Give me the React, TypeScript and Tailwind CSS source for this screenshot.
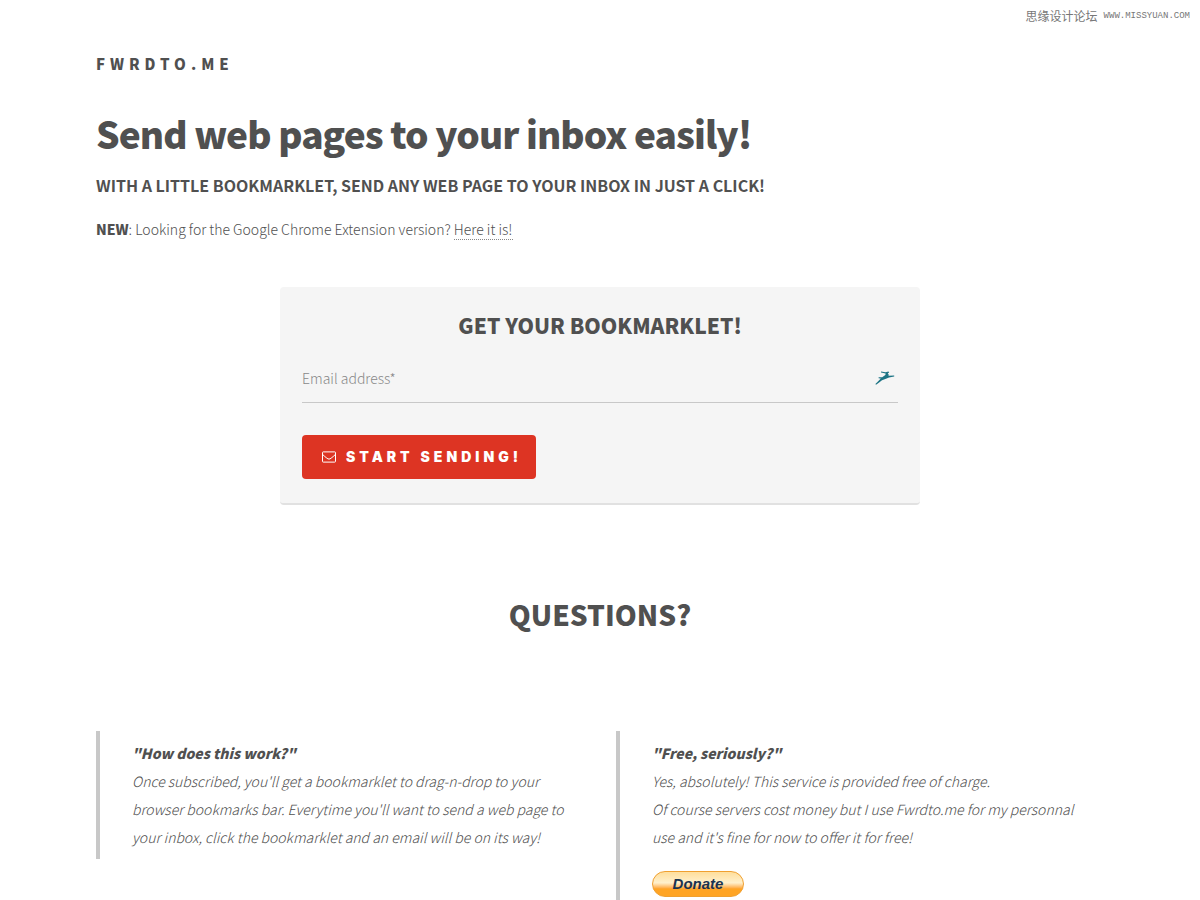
import type { ReactNode } from "react";

type QuestionProps = {
  title: string;
  children: ReactNode;
};

function Question({ title, children }: QuestionProps) {
  return (
    <blockquote className="border-l-4 border-[#c8c8c8] py-2 pl-8 pr-3 italic leading-7">
      <h3 className="font-black">"{title}"</h3>
      {children}
    </blockquote>
  );
}

function EnvelopeIcon() {
  return (
    <svg
      viewBox="0 0 14 12"
      className="h-3 w-3.5 shrink-0"
      fill="none"
      stroke="currentColor"
      strokeLinejoin="round"
      aria-hidden="true"
    >
      <rect x="0.5" y="0.9" width="13" height="10.2" rx="0.7" />
      <path d="M.7 3.5C2 5 3.500 6 4.800 7.100C5.700 7.800 6.300 8.100 7 8.100S8.300 7.800 9.200 7.100C10.500 6 12 5 13.300 3.500" />
    </svg>
  );
}

function GazelleIcon() {
  return (
    <svg viewBox="0 0 20 14" className="h-3.5 w-5 shrink-0" aria-hidden="true">
      <path
        fill="#1d7485"
        d="M6 .6L10.500 1.200L13.500 .4L14.200 1.400L12.800 2.200L13.600 3.400L13.600 4.700L19.200 4.500L19.200 5.500L14 6.500L11 7.800L7 9.200L3.800 11.800L1 13.700L.4 13L3.200 10.200L5.800 7.600L3.600 7.200L3.600 6.300L7.200 6.200L10 4.300L10.900 2.700L9.500 2.200L6 1.600Z"
      />
    </svg>
  );
}

export default function App() {
  return (
    <div className="relative overflow-hidden bg-white px-[8%] pt-[52px] font-['Noto_Sans_CJK_SC',sans-serif] text-sm font-light leading-7 text-[#505050]">
      <div className="absolute right-2.5 top-2 flex items-center gap-1.5 leading-4 text-[#777]">
        <span className="text-xs font-normal">思缘设计论坛</span>
        <span className="font-['Liberation_Mono',monospace] text-[9px]">
          WWW.MISSYUAN.COM
        </span>
      </div>

      <header>
        <p className="text-[15px] font-black leading-6 tracking-[5px]">
          FWRDTO.ME
        </p>
        <h1 className="mt-8 text-[37px] font-black leading-[50px] tracking-tight">
          Send web pages to your inbox easily!
        </h1>
        <h2 className="mt-[15px] text-base font-bold uppercase leading-6">
          With a little bookmarklet, send any web page to your inbox in just a
          click!
        </h2>
        <p className="mt-[18px]">
          <strong className="font-black">NEW</strong>: Looking for the Google
          Chrome Extension version?{" "}
          <a
            href="#chrome"
            className="inline-block border-b border-dotted border-[#888] leading-5"
          >
            Here it is!
          </a>
        </p>
      </header>

      <form
        className="mx-auto mt-11 max-w-[640px] rounded border-b-2 border-[#e1e1e1] bg-[#f5f5f5] px-[22px] pb-6 pt-[22px]"
        onSubmit={(e) => e.preventDefault()}
      >
        <h2 className="text-center text-[21px] font-black uppercase leading-8">
          Get your bookmarklet!
        </h2>
        <div className="mt-3 flex h-[50px] items-center border-b border-[#c8c8c8] pr-[3px]">
          <input
            type="email"
            aria-label="Email address"
            placeholder="Email address*"
            className="min-w-0 flex-1 bg-transparent outline-none placeholder:text-[#888]"
          />
          <GazelleIcon />
        </div>
        <button
          type="submit"
          className="mt-8 flex h-11 items-center gap-2.5 rounded bg-[#dd3423] pl-5 pr-3.5 font-['Inter',sans-serif] text-sm font-black uppercase tracking-[4px] text-white"
        >
          <EnvelopeIcon />
          Start sending!
        </button>
      </form>

      <section>
        <h2 className="mt-[87px] text-center text-[28px] font-black uppercase leading-[44px]">
          Questions?
        </h2>
        <div className="mt-[95px] grid grid-cols-2 items-start gap-8">
          <Question title="How does this work?">
            <p>
              Once subscribed, you'll get a bookmarklet to drag-n-drop to your
              browser bookmarks bar. Everytime you'll want to send a web page to
              your inbox, click the bookmarklet and an email will be on its way!
            </p>
          </Question>
          <Question title="Free, seriously?">
            <p>
              Yes, absolutely! This service is provided free of charge.
              <br />
              Of course servers cost money but I use Fwrdto.me for my personnal
              use and it's fine for now to offer it for free!
            </p>
            <button
              type="button"
              className="mt-5 block h-[26px] w-[92px] rounded-full border border-[#f0a030] bg-linear-to-b from-[#ffe0a0] from-5% via-[#fff0cc] via-45% to-[#ffa424] to-70% font-['Liberation_Sans',sans-serif] text-[15px] font-bold italic leading-6 text-[#1a3350]"
            >
              Donate
            </button>
          </Question>
        </div>
      </section>
    </div>
  );
}
